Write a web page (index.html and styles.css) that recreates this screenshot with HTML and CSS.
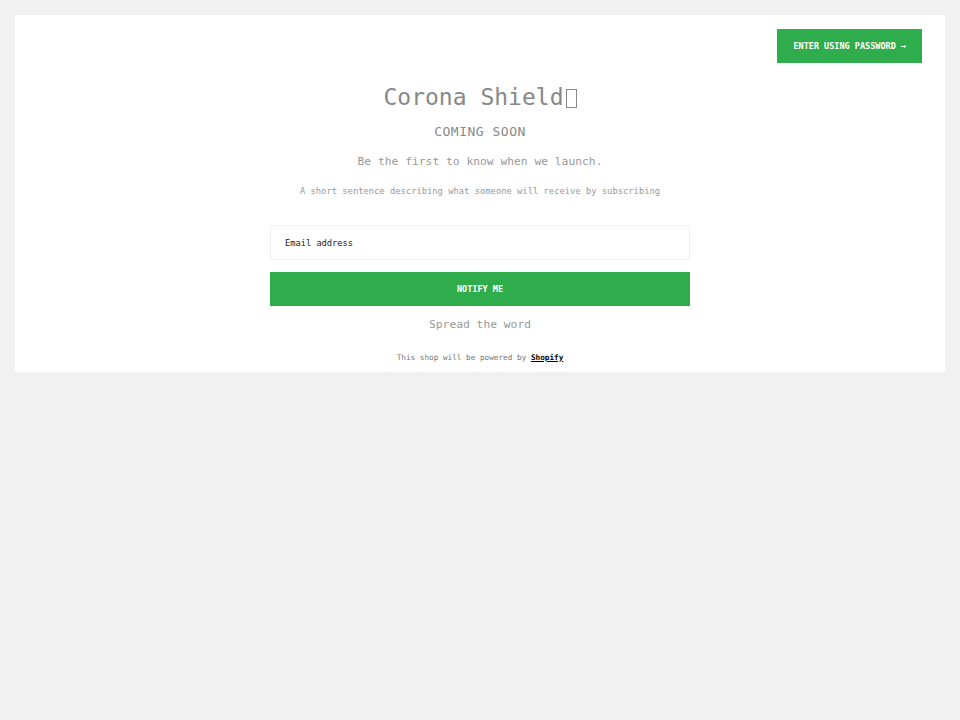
FILE: index.html
```html
<!DOCTYPE html>
<html lang="en">
<head>
    <meta charset="UTF-8">
    <title>Corona Shield - Opening Soon</title>
    <link rel="stylesheet" href="styles.css">
</head>
<body>
    <div class="page">
        <header class="top-bar">
            <a href="#" class="password-btn">Enter using password &rarr;</a>
        </header>

        <main class="content">
            <h1 class="shop-name">Corona Shield<span class="tofu"></span></h1>
            <h2 class="soon">Coming Soon</h2>
            <p class="lead">Be the first to know when we launch.</p>
            <p class="sub">A short sentence describing what someone will receive by subscribing</p>

            <form class="signup">
                <input type="email" class="email" placeholder="Email address">
                <button type="submit" class="notify">Notify me</button>
            </form>

            <p class="spread">Spread the word</p>
            <p class="powered">This shop will be powered by <a href="#">Shopify</a></p>
        </main>
    </div>
</body>
</html>
```

FILE: styles.css
```css
body {
    margin: 0;
    padding: 15px;
    background-color: #f1f1f1;
    font-family: 'DejaVu Sans Mono', monospace;
    color: #888;
}
.page {
    background-color: #fff;
    padding: 14px 23px 9px;
}
.top-bar {
    display: flex;
    justify-content: flex-end;
}
.password-btn {
    display: block;
    background-color: #2fac4b;
    color: #fff;
    text-decoration: none;
    text-transform: uppercase;
    font-size: 8.5px;
    font-weight: bold;
    line-height: 34px;
    padding: 0 16px;
}
.content {
    text-align: center;
}
.shop-name {
    font-weight: normal;
    font-size: 23px;
    margin: 20px 0 0;
    line-height: 28px;
    color: #888;
}
.tofu {
    display: inline-block;
    width: 9px;
    height: 17px;
    border: 1px solid #888;
    margin-left: 2px;
    vertical-align: -3px;
}
.soon {
    font-weight: normal;
    font-size: 13px;
    text-transform: uppercase;
    margin: 13px 0 0;
    line-height: 16px;
    letter-spacing: 0.5px;
    color: #888;
}
.lead {
    font-size: 11.3px;
    margin: 14px 0 0;
    line-height: 16px;
    color: #999;
}
.sub {
    font-size: 8.8px;
    margin: 15px 0 0;
    line-height: 12px;
    color: #999;
}
.signup {
    width: 420px;
    margin: 28px auto 0;
}
.email {
    display: block;
    box-sizing: border-box;
    width: 100%;
    height: 35px;
    border: 1px solid #f0f0f0;
    border-radius: 2px;
    padding: 0 14px;
    font-family: inherit;
    font-size: 8.7px;
}
.email::placeholder {
    color: #222;
}
.notify {
    display: block;
    width: 100%;
    height: 34px;
    margin-top: 12px;
    border: none;
    background-color: #2fac4b;
    color: #fff;
    font-family: inherit;
    font-size: 8.5px;
    font-weight: bold;
    text-transform: uppercase;
}
.spread {
    font-size: 11.3px;
    margin: 12px 0 0;
    line-height: 14px;
    color: #999;
}
.powered {
    font-size: 7.7px;
    margin: 21px 0 0;
    line-height: 10px;
    color: #777;
}
.powered a {
    color: #000;
    font-weight: bold;
}
```
